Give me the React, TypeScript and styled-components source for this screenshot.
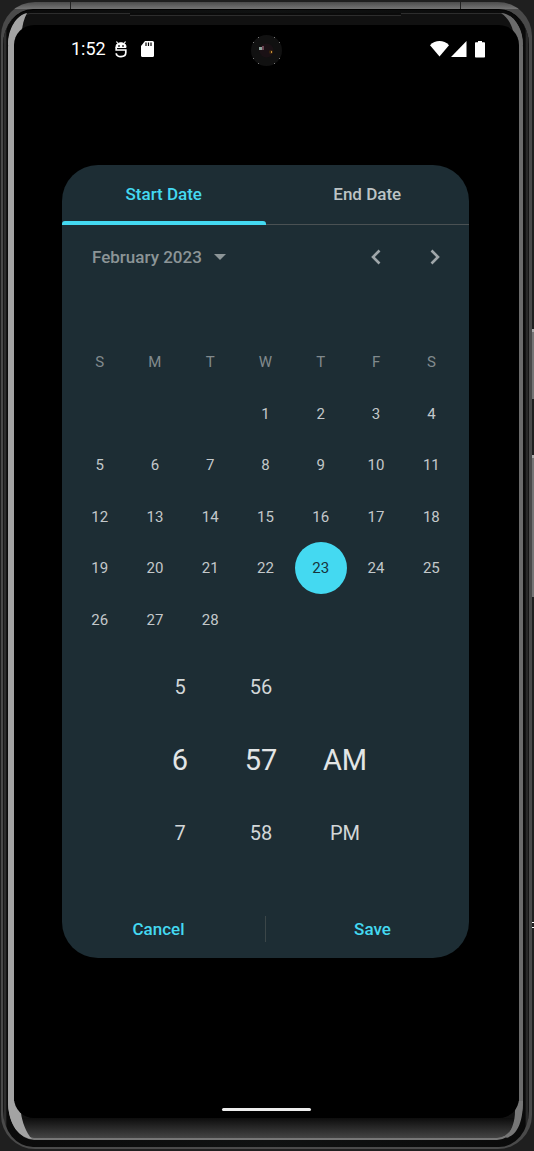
import React, { useState } from "react";
import styled, { createGlobalStyle } from "styled-components";

const ACCENT = "#44d9f1";
const SURFACE = "#1d2d34";

const GlobalStyle = createGlobalStyle`
  *, *::before, *::after { box-sizing: border-box; }
  body { margin: 0; background: #1f1f1f; font-family: Roboto, "Liberation Sans", sans-serif; }
  button { font: inherit; color: inherit; background: none; border: 0; padding: 0; margin: 0; cursor: pointer; }
`;

const Desk = styled.div`
  position: relative;
  display: flex;
  min-height: 100vh;
  padding: 2px 2px 2px 1px;
  overflow: hidden;
`;

const Rim = styled.div`
  position: relative;
  display: flex;
  flex: 1;
  padding: 7px 3px 2px 2px;
  border-radius: 34px;
  background:
    linear-gradient(#4c4c4c, #757575) top / 100% 7px no-repeat,
    linear-gradient(90deg, #4a4a4a, #4a4a4a);
  overflow: hidden;

  &::before,
  &::after {
    content: "";
    position: absolute;
    top: 0;
    width: 1px;
    height: 7px;
    background: #222;
  }
  &::before { left: 69px; }
  &::after { right: 71px; }
`;

const Bezel = styled.div`
  display: flex;
  flex: 1;
  padding: 3px 6px 7px 5px;
  border-radius: 30px / 36px;
  border-top: 1px solid #000;
  background: linear-gradient(90deg, #0c0c0c 0, #3a3a3a 2px, #0a0a0a 4px, #101212 50%, #0a0a0a calc(100% - 4px), #333 calc(100% - 2px), #0c0c0c 100%);
`;

const Glass = styled.div`
  position: relative;
  display: flex;
  flex: 1;
  padding: 11px 0 20px;
  border-style: solid;
  border-width: 1px 4px 2px 6px;
  border-color: #2d2d2d #6b6b6b #777 #a3a3a3;
  border-radius: 22px 22px 26px 26px / 34px 34px 38px 38px;
  background: linear-gradient(#0d0d0d, #444) bottom / 100% 20px no-repeat, #111;
`;

const Groove = styled.div`
  position: absolute;
  top: -1px;
  left: 116px;
  right: 118px;
  height: 3px;
  background: #0b0b0b;
  border-bottom: 1px solid #2d2d2d;
`;

const Glint = styled.svg<{ $v: "top" | "bottom"; $h: "left" | "right" }>`
  position: absolute;
  ${(p) => p.$v}: -1px;
  ${(p) => p.$h}: ${(p) => (p.$h === "left" ? "-6px" : "-4px")};
`;

const SideKey = styled.div<{ $top: number; $height: number }>`
  position: absolute;
  right: 0;
  top: ${(p) => p.$top}px;
  width: 2px;
  height: ${(p) => p.$height}px;
  background: #757575;
  border-top: 3px solid #aaa;
`;

const SideMark = styled.div`
  position: absolute;
  right: 0;
  top: 922px;
  width: 2px;
  height: 6px;
  border: solid #fff;
  border-width: 1px 0;
`;

const Screen = styled.div`
  position: relative;
  display: flex;
  flex: 1;
  flex-direction: column;
  border-radius: 20px;
  background: #000;
  color: #fff;
`;

const StatusBar = styled.header`
  display: flex;
  align-items: center;
  justify-content: space-between;
  height: 48px;
  padding: 0 34px 0 57px;
`;

const StatusGroup = styled.div<{ $gap: number }>`
  display: flex;
  align-items: center;
  gap: ${(p) => p.$gap}px;
  font-size: 18px;
  line-height: 24px;
`;

const Camera = styled.svg`
  position: absolute;
  left: 50%;
  top: 10px;
  margin-left: -16px;
`;

const Main = styled.main`
  flex: 1;
  padding: 92px 50px 40px 48px;
`;

const Dialog = styled.section`
  display: flex;
  flex-direction: column;
  height: 793px;
  border-radius: 36px;
  background: ${SURFACE};
  overflow: hidden;
`;

const Tabs = styled.div`
  display: flex;
  height: 60px;
  background: linear-gradient(#4a5153, #4a5153) bottom / 100% 1px no-repeat;
`;

const Tab = styled.button<{ $active: boolean }>`
  position: relative;
  flex: 1;
  padding-bottom: 2px;
  font-size: 17px;
  font-weight: 500;
  line-height: 20px;
  color: ${(p) => (p.$active ? ACCENT : "#bcc3c5")};

  &::after {
    content: "";
    position: absolute;
    left: 0;
    right: 0;
    bottom: 0;
    height: 4px;
    border-radius: 3px 3px 0 0;
    background: ${(p) => (p.$active ? ACCENT : "transparent")};
  }
`;

const MonthBar = styled.div`
  display: flex;
  align-items: center;
  justify-content: space-between;
  height: 64px;
  padding: 0 19px 0 30px;
  color: #8c9597;
`;

const MonthButton = styled.button`
  display: flex;
  align-items: center;
  gap: 12px;
  font-size: 17px;
  font-weight: 500;
  line-height: 24px;
`;

const Arrows = styled.div`
  display: flex;
  gap: 29px;
  color: #9fa6a9;
`;

const ArrowButton = styled.button`
  display: flex;
  width: 30px;
  height: 30px;
`;

const Calendar = styled.table`
  width: calc(100% - 20px);
  margin: 47px 10px 0;
  table-layout: fixed;
  border-collapse: collapse;
  text-align: center;
  font-size: 15px;
  line-height: 20px;

  th, td { height: 51px; padding: 0; }
  th, tr:nth-child(even) td { height: 52px; }
  th { font-weight: 400; color: #818a8d; }
`;

const Day = styled.button<{ $selected: boolean }>`
  display: block;
  width: 52px;
  height: 52px;
  margin: -1px auto;
  border-radius: 50%;
  color: ${(p) => (p.$selected ? "#17343c" : "#c3c8ca")};
  background: ${(p) => (p.$selected ? ACCENT : "transparent")};
`;

const TimePicker = styled.div`
  display: grid;
  grid-template-columns: 78px 84px 84px;
  grid-auto-rows: 73px;
  margin-top: 5px;
  padding-left: 79px;
`;

const TimeOption = styled.button<{ $current: boolean }>`
  font-size: ${(p) => (p.$current ? 29 : 20)}px;
  line-height: 36px;
  color: ${(p) => (p.$current ? "#e2e5e6" : "#d3d7d8")};
`;

const Actions = styled.footer`
  display: flex;
  align-items: center;
  height: 26px;
  margin: auto 0 16px;
`;

const Action = styled.button<{ $side: "left" | "right" }>`
  flex: 1;
  padding-${(p) => p.$side}: 10px;
  font-size: 17px;
  font-weight: 500;
  line-height: 26px;
  color: ${ACCENT};
`;

const Divider = styled.span`
  width: 1px;
  height: 26px;
  background: #3b4648;
`;

const HomeBar = styled.div`
  width: 89px;
  height: 3px;
  margin: 0 auto 7px;
  border-radius: 2px;
  background: #ececec;
`;

const WEEKDAYS = ["S", "M", "T", "W", "T", "F", "S"];
const FIRST_WEEKDAY = 3;
const DAYS_IN_MONTH = 28;

const WEEKS = Array.from({ length: 5 }, (_, w) =>
  Array.from({ length: 7 }, (_, d) => {
    const day = w * 7 + d - FIRST_WEEKDAY + 1;
    return day >= 1 && day <= DAYS_IN_MONTH ? day : null;
  })
);

const TIMES = [
  ["5", "56", null],
  ["6", "57", "AM"],
  ["7", "58", "PM"],
];

function StatusIcons() {
  return (
    <StatusGroup $gap={2}>
      <svg width="19" height="16" viewBox="0 0 19 16" fill="#fff" aria-label="Wi-Fi">
        <path d="M0 4.2C5.2-1.3 13.8-1.3 19 4.2L9.5 15.6z" />
      </svg>
      <svg width="16" height="16" viewBox="0 0 16 16" fill="#fff" aria-label="Signal">
        <path d="M15.500 0v16H0z" />
      </svg>
      <svg width="16" height="17" viewBox="0 0 16 17" fill="#fff" aria-label="Battery">
        <path d="M9 0h4v1.300h2.200q.8 0 .8.8V15.700q0 .8-.8.8H6.800q-.8 0-.8-.8V2.100q0-.8.8-.8H9z" />
      </svg>
    </StatusGroup>
  );
}

export default function App() {
  const [tab, setTab] = useState(0);
  const [selected, setSelected] = useState(23);

  return (
    <>
      <GlobalStyle />
      <Desk>
        <SideKey $top={329} $height={70} />
        <SideKey $top={455} $height={142} />
        <SideMark />
        <Rim>
          <Bezel>
            <Glass>
              <Groove />
              <Glint $v="top" $h="left" width="20" height="32" fill="#a3a3a3" aria-hidden>
                <path d="M0 32C0 15 9 2 19 0C16 6 14 12 14 20L10 32z" />
              </Glint>
              <Glint $v="top" $h="right" width="22" height="32" fill="#6b6b6b" aria-hidden>
                <path d="M0 0C12 1 22 14 22 32H14L12 18C10 10 6 4 0 0z" />
              </Glint>
              <Glint $v="bottom" $h="left" width="24" height="38" fill="#a3a3a3" aria-hidden>
                <path d="M0 0C0 20 8 36 24 38C18 32 14 20 13 12L8 0z" />
              </Glint>
              <Glint $v="bottom" $h="right" width="17" height="38" fill="#777" aria-hidden>
                <path d="M17 0C17 20 12 34 0 37C5 30 9 22 9 10L10 0z" />
              </Glint>
              <Screen>
                <StatusBar>
                  <StatusGroup $gap={9}>
                    <span>1:52</span>
                    <svg width="12" height="17" viewBox="0 0 12 17" fill="none" stroke="#fff" strokeWidth="1.700" aria-hidden>
                      <path d="M1.500.5l1.300 2M10.500.5l-1.300 2" strokeWidth="1.200" />
                      <path d="M1 6.500V5.500C1 .5 11 .5 11 5.500v1z" fill="#fff" strokeWidth="1" />
                      <path d="M3.200 5h1.600M7.200 5h1.600" stroke="#000" strokeWidth="1.600" />
                      <path d="M1.200 6v3h9.600v2.500c0 5.400-9.600 5.400-9.600.8" />
                    </svg>
                    <svg width="19" height="16" viewBox="0 0 19 16" aria-hidden>
                      <path d="M9 0h7.500Q18 0 18 1.500v13q0 1.500-1.500 1.500H6.500Q5 16 5 14.500V5z" fill="#fff" />
                      <path d="M10 1.500V5M12.500 1.500V5M15 1.500V5" stroke="#000" strokeWidth="1.200" />
                    </svg>
                  </StatusGroup>
                  <StatusIcons />
                </StatusBar>
                <Camera width="31" height="31" viewBox="0 0 31 31" aria-hidden>
                  <circle cx="15.500" cy="15.500" r="15.500" fill="#111" />
                  <circle cx="15.500" cy="15.500" r="7" fill="#1a1115" />
                  <g fill="#777">
                    <path d="M7 2h1v1H7zM23 2h1v1h-1zM2 7h1v1H2zM28 7h1v1h-1zM2 23h1v1H2zM28 23h1v1h-1zM7 28h1v1H7zM23 28h1v1h-1z" />
                  </g>
                  <path d="M8 12h3v3H8z" fill="#8ca29b" />
                  <path d="M11 11h2v4h-2z" fill="#6c4653" />
                  <circle cx="20" cy="17" r="2" fill="#3c260c" />
                  <path d="M20 16h1v2h-1z" fill="#c9943c" />
                </Camera>

                <Main>
                  <Dialog role="dialog" aria-label="Date and time">
                    <Tabs role="tablist">
                      {["Start Date", "End Date"].map((label, i) => (
                        <Tab key={label} role="tab" aria-selected={tab === i} $active={tab === i} onClick={() => setTab(i)}>
                          {label}
                        </Tab>
                      ))}
                    </Tabs>

                    <MonthBar>
                      <MonthButton>
                        February 2023
                        <svg width="12" height="6" viewBox="0 0 12 6" fill="currentColor" aria-hidden>
                          <path d="M0 0h12L6 6z" />
                        </svg>
                      </MonthButton>
                      <Arrows>
                        <ArrowButton aria-label="Previous month">
                          <svg width="30" height="30" viewBox="0 0 30 30" fill="none" stroke="currentColor" strokeWidth="2.600" aria-hidden>
                            <path d="M18.500 8.500L12 15l6.500 6.500" />
                          </svg>
                        </ArrowButton>
                        <ArrowButton aria-label="Next month">
                          <svg width="30" height="30" viewBox="0 0 30 30" fill="none" stroke="currentColor" strokeWidth="2.600" aria-hidden>
                            <path d="M11.500 8.500L18 15l-6.500 6.500" />
                          </svg>
                        </ArrowButton>
                      </Arrows>
                    </MonthBar>

                    <Calendar>
                      <thead>
                        <tr>
                          {WEEKDAYS.map((name, i) => (
                            <th key={i} scope="col">{name}</th>
                          ))}
                        </tr>
                      </thead>
                      <tbody>
                        {WEEKS.map((week, w) => (
                          <tr key={w}>
                            {week.map((day, d) => (
                              <td key={d}>
                                {day && (
                                  <Day $selected={day === selected} onClick={() => setSelected(day)}>
                                    {day}
                                  </Day>
                                )}
                              </td>
                            ))}
                          </tr>
                        ))}
                      </tbody>
                    </Calendar>

                    <TimePicker>
                      {TIMES.flatMap((row, r) =>
                        row.map((value, c) =>
                          value ? (
                            <TimeOption key={`${r}-${c}`} $current={r === 1}>{value}</TimeOption>
                          ) : (
                            <span key={`${r}-${c}`} />
                          )
                        )
                      )}
                    </TimePicker>

                    <Actions>
                      <Action $side="right">Cancel</Action>
                      <Divider />
                      <Action $side="left">Save</Action>
                    </Actions>
                  </Dialog>
                </Main>
                <HomeBar />
              </Screen>
            </Glass>
          </Bezel>
        </Rim>
      </Desk>
    </>
  );
}
